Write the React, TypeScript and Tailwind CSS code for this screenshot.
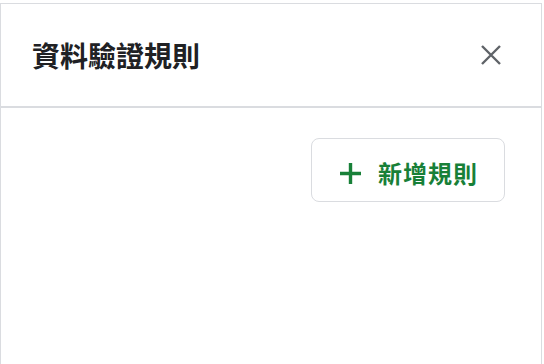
export default function App() {
  return (
    <div
      className="w-[544px] h-[364px] bg-white pt-[3px] pr-[2px] overflow-hidden"
      style={{ fontFamily: '"Noto Sans CJK TC", "Noto Sans", sans-serif' }}
    >
      <div className="h-[400px] flex flex-col border-t border-l border-r border-[#dadce0]">
        {/* Header */}
        <div className="h-[104px] flex items-center justify-between pl-[31px] pr-[40px] border-b-2 border-[#dadce0] flex-shrink-0">
          <h2 className="text-[28px] leading-none font-bold text-[#202124]">資料驗證規則</h2>
          <button className="w-5 h-5 flex items-center justify-center text-[#5f6368]">
            <svg width="20" height="20" viewBox="0 0 20 20" fill="none" stroke="currentColor" strokeWidth="2.4">
              <path d="M1 1L19 19M19 1L1 19" />
            </svg>
          </button>
        </div>

        {/* Body */}
        <div className="flex justify-end pt-[30px] pr-[36px]">
          <button className="w-[194px] h-[64px] rounded-lg border border-[#dadce0] bg-white flex items-center pl-[28px] pt-[6px] gap-[17px] text-[#188038]">
            <svg width="21" height="21" viewBox="0 0 21 21" fill="none" stroke="currentColor" strokeWidth="3.4">
              <path d="M10.5 0V21M0 10.5H21" />
            </svg>
            <span className="text-[24px] leading-none font-bold tracking-[1px]">新增規則</span>
          </button>
        </div>
      </div>
    </div>
  )
}
